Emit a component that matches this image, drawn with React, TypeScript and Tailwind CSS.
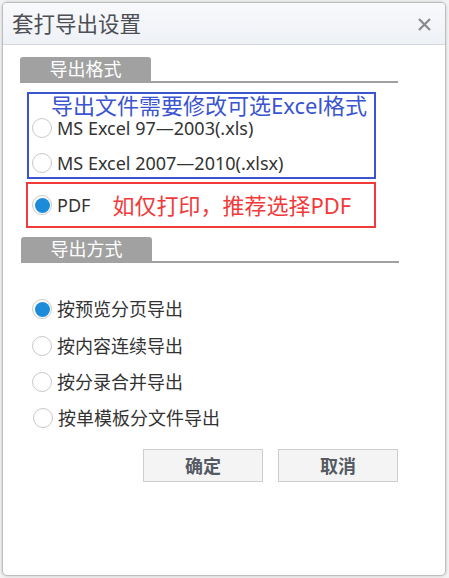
import React from "react";

const FONT = { fontFamily: '"Noto Sans", "Noto Sans CJK SC", sans-serif' };

function Radio({ checked }: { checked?: boolean }) {
  return (
    <span className="flex h-[20px] w-[20px] shrink-0 items-center justify-center rounded-full border border-[#c9c9c9] bg-white">
      {checked && <span className="block h-[15px] w-[15px] rounded-full bg-[#1c8bd9]" />}
    </span>
  );
}

function SectionTab({ label, ml }: { label: string; ml: string }) {
  return (
    <div className={`${ml} w-[378px]`}>
      <div className="flex h-[24px] w-[131px] items-center justify-center rounded-t-[3px] bg-[#a1a1a1] text-[18px] leading-none text-white">
        {label}
      </div>
      <div className="h-[2px] w-full bg-[#a1a1a1]" />
    </div>
  );
}

function Row({ label, checked, extra }: { label: string; checked?: boolean; extra?: string }) {
  return (
    <div className={`flex h-[20px] items-center gap-[5px] ${extra ?? ""}`}>
      <Radio checked={checked} />
      <span className="text-[18px] leading-[18px] text-[#333]">{label}</span>
    </div>
  );
}

export default function App() {
  return (
    <div className="relative h-[578px] w-[449px] overflow-hidden bg-[#f2f2f2]" style={FONT}>
      <div className="ml-[2px] mt-[2px] flex h-[574px] w-[444px] flex-col overflow-hidden rounded-[5px] border border-[#bdbdbd] bg-white shadow-[0_0_3px_rgba(0,0,0,0.2)]">
        {/* header */}
        <div className="flex h-[42px] shrink-0 items-center justify-between border-b border-[#d3d7de] bg-gradient-to-b from-[#f8f9fb] to-[#eef1f6] pl-[9px] pr-[14px]">
          <span className="text-[21.5px] leading-none text-[#4d4f55]">套打导出设置</span>
          <svg width="13" height="13" viewBox="0 0 13 13" className="mt-[2px]">
            <path d="M1 1 L12 12 M12 1 L1 12" stroke="#8a8a8a" strokeWidth="2.2" />
          </svg>
        </div>

        {/* body */}
        <div className="flex flex-col pt-[12px]">
          <SectionTab label="导出格式" ml="ml-[17px]" />

          {/* blue box */}
          <div className="ml-[24px] mt-[9px] h-[87px] w-[349px] border-2 border-[#3a55cf] pl-[3px]">
            <div className="flex h-[23px] items-start pl-[19px] text-[22px] leading-[22px] text-[#3a55cf]">
              导出文件需要修改可选Excel格式
            </div>
            <Row label="MS Excel 97—2003(.xls)" extra="mt-[1px]" />
            <Row label="MS Excel 2007—2010(.xlsx)" extra="mt-[15px]" />
          </div>

          {/* red box */}
          <div className="ml-[23px] mt-[3px] flex h-[46px] w-[350px] items-center border-2 border-[#f23a3a] pl-[4px]">
            <Radio checked />
            <span className="ml-[5px] text-[18px] leading-none text-[#333]">PDF</span>
            <span className="ml-[22px] text-[22px] leading-none text-[#f23a3a]">如仅打印，推荐选择PDF</span>
          </div>

          <div className="mt-[9px]">
            <SectionTab label="导出方式" ml="ml-[18px]" />
          </div>

          <div className="ml-[29px] mt-[36px] flex flex-col">
            <Row label="按预览分页导出" checked />
            <Row label="按内容连续导出" extra="mt-[17px]" />
            <Row label="按分录合并导出" extra="mt-[16px]" />
            <Row label="按单模板分文件导出" extra="mt-[16px] ml-[1px]" />
          </div>

          <div className="mt-[21px] flex gap-[15px] pl-[140px]">
            <button className="flex h-[33px] w-[120px] items-center justify-center border border-[#cdcdcd] bg-[#f4f4f4] text-[18px] font-bold leading-none text-[#555a63]">
              确定
            </button>
            <button className="flex h-[33px] w-[120px] items-center justify-center border border-[#cdcdcd] bg-[#f4f4f4] text-[18px] font-bold leading-none text-[#555a63]">
              取消
            </button>
          </div>
        </div>
      </div>
    </div>
  );
}
